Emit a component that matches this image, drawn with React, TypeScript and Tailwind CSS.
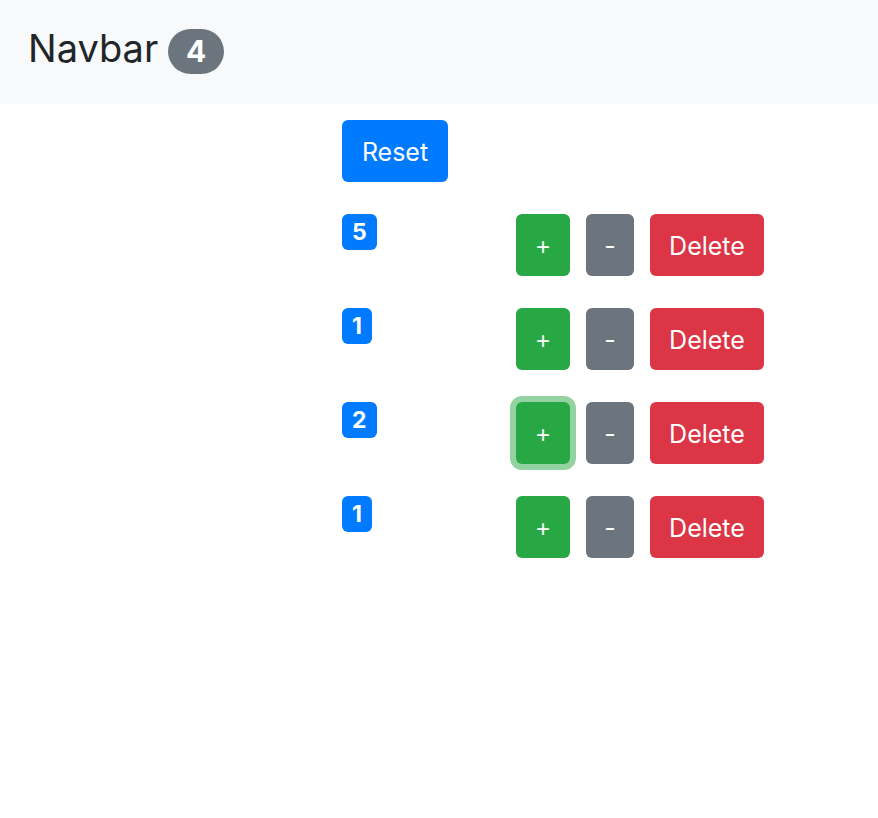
import React from "react";

const counters = [
  { id: 1, value: 5 },
  { id: 2, value: 1 },
  { id: 3, value: 2, focused: true },
  { id: 4, value: 1 },
];

const font = { fontFamily: "Inter, 'Liberation Sans', sans-serif" };

export default function App() {
  return (
    <div className="min-h-screen bg-white text-[#212529]" style={font}>
      <nav className="flex h-[104px] items-center bg-[#f8f9fa] pl-[28px]">
        <div className="flex items-center gap-[10px]">
          <span className="mb-[8px] text-[38px] leading-none">Navbar</span>
          <span className="-mt-[2px] flex h-[45px] w-[56px] items-center justify-center rounded-full bg-[#6c757d] text-[30px] font-bold leading-none text-white">
            4
          </span>
        </div>
      </nav>

      <main className="flex flex-col gap-[32px] pl-[342px] pt-[16px]">
        <button className="flex h-[62px] w-[106px] items-center justify-center rounded-[6px] bg-[#007bff] pt-[3px] text-[25px] text-white">
          Reset
        </button>

        {counters.map((c) => (
          <div key={c.id} className="flex items-start">
            <div className="w-[174px]">
              <span className="inline-flex h-[36px] items-center justify-center rounded-[6px] bg-[#007bff] px-[10px] pt-[1px] text-[23px] font-bold leading-none text-white">
                {c.value}
              </span>
            </div>
            <div className="flex gap-[16px]">
              <button
                className={`flex h-[62px] w-[54px] items-center justify-center rounded-[6px] bg-[#28a745] pt-[3px] font-['Liberation_Sans'] text-[24px] text-white ${
                  c.focused ? "shadow-[0_0_0_6px_rgba(40,167,69,0.5)]" : ""
                }`}
              >
                +
              </button>
              <button className="flex h-[62px] w-[48px] items-center justify-center rounded-[6px] bg-[#6c757d] pt-[3px] text-[25px] text-white">
                -
              </button>
              <button className="flex h-[62px] w-[114px] items-center justify-center rounded-[6px] bg-[#dc3545] pt-[3px] text-[25px] text-white">
                Delete
              </button>
            </div>
          </div>
        ))}
      </main>
    </div>
  );
}
